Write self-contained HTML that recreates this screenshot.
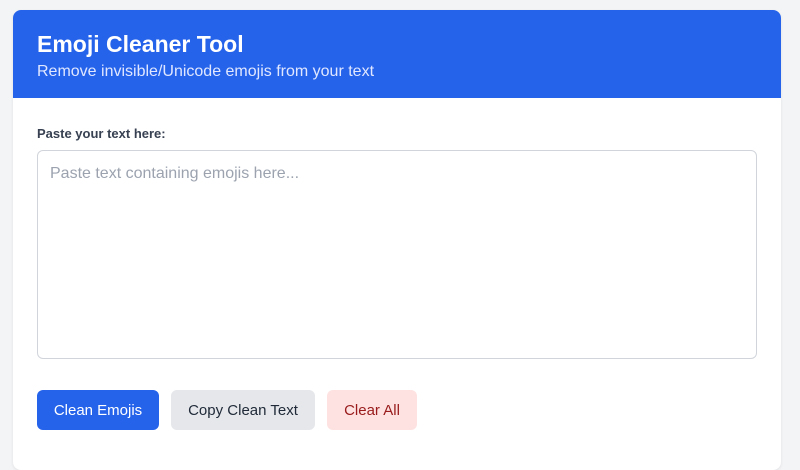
<!DOCTYPE html>
<html><head><style>
*{box-sizing:border-box;margin:0;padding:0}
body{width:800px;height:458px;background:#f3f4f6;font-family:"Liberation Sans",sans-serif;overflow:hidden;position:relative}
.card{position:absolute;left:13px;top:10px;width:768px;height:460px;background:#fff;border-radius:8px;overflow:hidden;box-shadow:0 1px 3px rgba(0,0,0,.08)}
.hd{background:#2563eb;height:88px;padding:20px 24px;color:#fff}
.hd h1{font-size:23px;font-weight:bold;line-height:28px}
.hd p{font-size:16px;line-height:20px;color:#e0e7ff;margin-top:4px}
.lbl{position:absolute;left:24px;top:116px;font-size:13px;font-weight:bold;color:#374151}
.ta{position:absolute;left:24px;top:140px;width:720px;height:209px;border:1px solid #d1d5db;border-radius:6px;padding:14px 12px;font-size:16px;color:#9ca3af}
.btn{position:absolute;top:380px;height:40px;border-radius:6px;font-size:15px;line-height:42px;text-align:center}
</style></head><body>
<div class="card">
<div class="hd"><h1>Emoji Cleaner Tool</h1><p>Remove invisible/Unicode emojis from your text</p></div>
<div class="lbl">Paste your text here:</div>
<div class="ta">Paste text containing emojis here...</div>
<div class="btn" style="left:24px;width:122px;background:#2563eb;color:#fff">Clean Emojis</div>
<div class="btn" style="left:158px;width:144px;background:#e5e7eb;color:#1f2937">Copy Clean Text</div>
<div class="btn" style="left:314px;width:90px;background:#fee2e2;color:#991b1b">Clear All</div>
</div>
</body></html>
